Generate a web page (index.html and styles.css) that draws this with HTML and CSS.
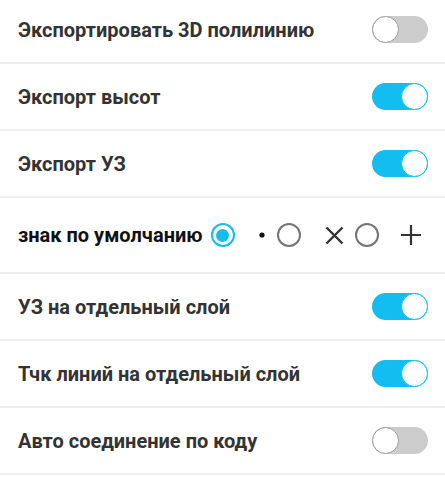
FILE: index.html
```html
<!DOCTYPE html>
<html lang="ru">
<head>
<meta charset="utf-8">
<link rel="stylesheet" href="styles.css">
</head>
<body>
<div class="list">
  <div class="row">
    <span class="label">Экспортировать 3D полилинию</span>
    <span class="toggle"><span class="knob"></span></span>
  </div>
  <div class="row">
    <span class="label">Экспорт высот</span>
    <span class="toggle on"><span class="knob"></span></span>
  </div>
  <div class="row">
    <span class="label">Экспорт УЗ</span>
    <span class="toggle on"><span class="knob"></span></span>
  </div>
  <div class="row row-radio">
    <span class="label label-dark">знак по умолчанию</span>
    <div class="radios">
      <span class="radio checked"></span>
      <svg class="mark mark-dot" width="6" height="6" viewBox="0 0 6 6"><circle cx="3" cy="3" r="2.6" fill="#111"/></svg>
      <span class="radio"></span>
      <svg class="mark mark-x" width="19" height="19" viewBox="0 0 19 19"><path d="M1.5 1.5 L17.5 17.5 M17.5 1.5 L1.5 17.5" stroke="#333" stroke-width="2.4" fill="none"/></svg>
      <span class="radio"></span>
      <svg class="mark mark-plus" width="20" height="20" viewBox="0 0 20 20"><path d="M10 0 V20 M0 10 H20" stroke="#333" stroke-width="2.2" fill="none"/></svg>
    </div>
  </div>
  <div class="row">
    <span class="label">УЗ на отдельный слой</span>
    <span class="toggle on"><span class="knob"></span></span>
  </div>
  <div class="row">
    <span class="label">Тчк линий на отдельный слой</span>
    <span class="toggle on"><span class="knob"></span></span>
  </div>
  <div class="row">
    <span class="label">Авто соединение по коду</span>
    <span class="toggle"><span class="knob"></span></span>
  </div>
</div>
</body>
</html>
```
FILE: styles.css
```css
html, body {
  margin: 0;
  padding: 0;
  background: #ffffff;
}
body {
  font-family: Roboto, "Noto Sans", "Liberation Sans", sans-serif;
  overflow: hidden;
}
.list {
  margin-top: -3px;
}
.row {
  height: 65px;
  display: flex;
  align-items: center;
  justify-content: space-between;
  padding: 0 17px 0 18px;
  border-bottom: 2px solid #f0f0f0;
}
.row-radio {
  height: 74px;
  justify-content: flex-start;
}
.label {
  font-size: 20px;
  font-weight: 700;
  color: #333333;
  white-space: nowrap;
}
.label-dark {
  color: #111111;
}
.toggle {
  position: relative;
  width: 56px;
  height: 27px;
  border-radius: 14px;
  background: #cccccc;
  flex: none;
}
.toggle .knob {
  position: absolute;
  top: 0;
  left: 0;
  width: 25px;
  height: 25px;
  border-radius: 50%;
  background: #ffffff;
  border: 1px solid #9a9a9a;
}
.toggle.on {
  background: #13bdef;
}
.toggle.on .knob {
  left: auto;
  right: 0;
  border-color: #13bdef;
}
.radios {
  display: flex;
  align-items: center;
  margin-left: 8px;
}
.radio {
  width: 20px;
  height: 20px;
  border-radius: 50%;
  border: 2.5px solid #757575;
  flex: none;
  position: relative;
}
.radio.checked {
  border-color: #13bdef;
}
.radio.checked::after {
  content: "";
  position: absolute;
  left: 3.5px;
  top: 3.5px;
  width: 13px;
  height: 13px;
  border-radius: 50%;
  background: #13bdef;
}
.mark {
  display: block;
  flex: none;
}
.mark-dot {
  margin: 0 12px 0 24px;
}
.mark-x {
  margin: 0 11px 0 24px;
}
.mark-plus {
  margin-left: 22px;
}
```
